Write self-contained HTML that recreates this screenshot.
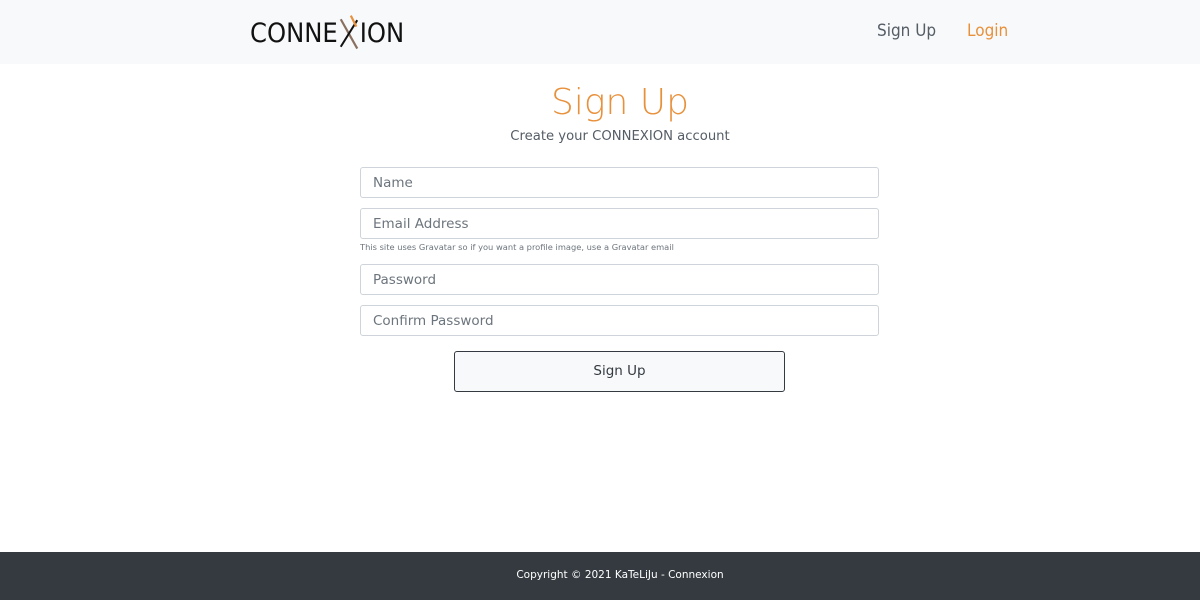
<!DOCTYPE html>
<html><head><meta charset="utf-8"><style>
*{box-sizing:border-box;margin:0;padding:0}
body{width:1200px;height:600px;background:#fff;font-family:"DejaVu Sans","Liberation Sans",sans-serif;position:relative;overflow:hidden}
.hdr{position:absolute;left:0;top:0;width:1200px;height:64px;background:#f8f9fa}
.logo{position:absolute;left:250px;top:14px;font-family:"DejaVu Sans Condensed","Liberation Sans Narrow",sans-serif;font-size:27px;color:#111;letter-spacing:0px;display:flex;align-items:center;height:38px;font-weight:300}
.nav{position:absolute;top:21px;font-family:"DejaVu Sans Condensed","Liberation Sans Narrow",sans-serif;font-size:17px}
h1{position:absolute;left:0;width:1240px;text-align:center;top:82px;font-weight:normal;font-size:36px;color:#e8913c;font-family:"DejaVu Sans",sans-serif;font-weight:200}
.sub{position:absolute;width:1240px;text-align:center;top:129px;font-size:13.2px;color:#555d66}
.inp{position:absolute;left:360px;width:519px;height:31px;border:1px solid #ced4da;border-radius:3px;font-size:13.5px;color:#6c757d;padding:7px 12px}
.small{position:absolute;left:360px;top:242px;font-size:8.3px;color:#6c757d}
.btn{position:absolute;left:454px;top:351px;width:331px;height:41px;border:1px solid #343a40;border-radius:3px;background:#f8f9fa;text-align:center;line-height:39px;font-size:13.5px;color:#343a40}
.ftr{position:absolute;left:0;top:552px;width:1200px;height:48px;background:#343a40;color:#fff;font-size:10.5px;text-align:center;line-height:46px;padding-left:40px}
</style></head><body>
<div class="hdr">
<div class="logo">CONNE<svg width="22" height="38" viewBox="0 0 24 38"><line x1="3" y1="4" x2="21" y2="36" stroke="#8a7060" stroke-width="2.4"/><line x1="21" y1="5" x2="3" y2="34" stroke="#111" stroke-width="2.2"/><line x1="14" y1="0" x2="20" y2="12" stroke="#e8913c" stroke-width="2.4"/></svg>ION</div>
<div class="nav" style="left:877px;color:#555d66">Sign Up</div>
<div class="nav" style="left:967px;color:#e8913c">Login</div>
</div>
<h1>Sign Up</h1>
<div class="sub">Create your CONNEXION account</div>
<div class="inp" style="top:167px">Name</div>
<div class="inp" style="top:208px">Email Address</div>
<div class="small">This site uses Gravatar so if you want a profile image, use a Gravatar email</div>
<div class="inp" style="top:264px">Password</div>
<div class="inp" style="top:305px">Confirm Password</div>
<div class="btn">Sign Up</div>
<div class="ftr">Copyright © 2021 KaTeLiJu - Connexion</div>
</body></html>
